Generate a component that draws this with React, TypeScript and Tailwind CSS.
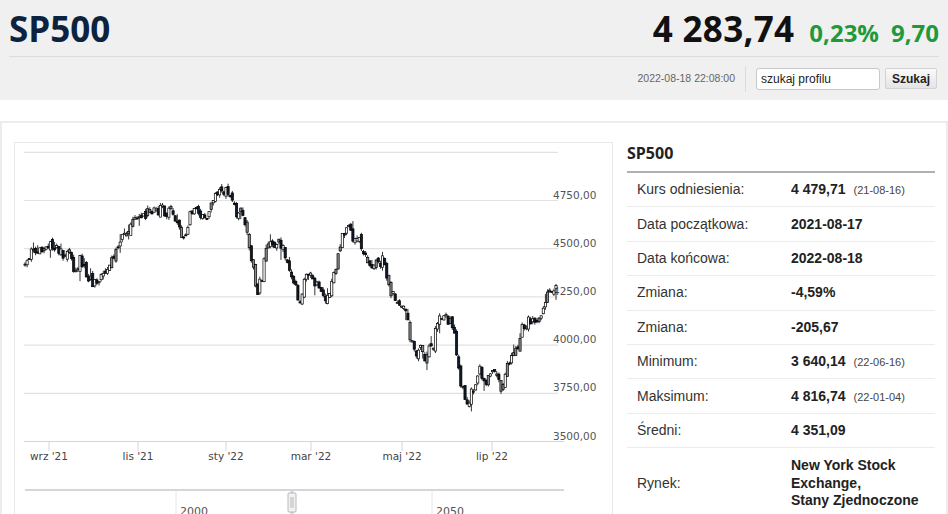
import React from 'react';

const KEY: [number, number][] = [
  [25, 264], [32, 252], [45, 245], [58, 250], [70, 258], [75, 275], [80, 260], [90, 280], [97, 285],
  [105, 272], [112, 258], [118, 243], [130, 228], [140, 217], [150, 212], [162, 210], [172, 213],
  [178, 230], [184, 240], [190, 215], [200, 212], [207, 218], [212, 205], [218, 193], [226, 192],
  [230, 198], [236, 212], [242, 210], [247, 235], [253, 270], [257, 292], [262, 275], [268, 243],
  [276, 242], [283, 248], [288, 262], [295, 285], [300, 305], [305, 277], [312, 275], [320, 295],
  [327, 302], [333, 280], [340, 245], [347, 225], [352, 236], [358, 240], [363, 250], [370, 262],
  [378, 266], [384, 255], [388, 285], [395, 300], [402, 305], [407, 318], [411, 342], [416, 358],
  [420, 345], [424, 360], [428, 350], [433, 345], [438, 320], [445, 318], [452, 322], [455, 330],
  [457, 358], [461, 385], [464, 395], [467, 408], [471, 392], [475, 385], [479, 368], [484, 385],
  [489, 380], [494, 368], [499, 385], [503, 388], [508, 365], [513, 352], [518, 345], [522, 330],
  [528, 322], [535, 318], [542, 315], [546, 300], [552, 288], [556, 290],
];

function interp(x: number) {
  for (let i = 1; i < KEY.length; i++) {
    const [x1, y1] = KEY[i];
    const [x0, y0] = KEY[i - 1];
    if (x <= x1) return y0 + ((x - x0) / (x1 - x0)) * (y1 - y0);
  }
  return KEY[KEY.length - 1][1];
}

function rng(seed: number) {
  return () => {
    seed = (seed + 0x6d2b79f5) | 0;
    let t = Math.imul(seed ^ (seed >>> 15), 1 | seed);
    t = (t + Math.imul(t ^ (t >>> 7), 61 | t)) ^ t;
    return ((t ^ (t >>> 14)) >>> 0) / 4294967296;
  };
}

const candles = (() => {
  const r = rng(11);
  const n = 252;
  const out: { x: number; o: number; c: number; hi: number; lo: number; fill: string }[] = [];
  let prev = interp(25);
  for (let i = 0; i < n; i++) {
    const x = 25 + (i * 531) / (n - 1);
    const c = interp(x) + (r() - 0.5) * 11;
    const o = prev + (r() - 0.5) * 6;
    const hi = Math.min(o, c) - r() * 3 - (r() < 0.1 ? r() * 8 : 0);
    const lo = Math.max(o, c) + r() * 3 + (r() < 0.1 ? r() * 10 : 0);
    const up = c < o;
    const fill = up ? (r() < 0.3 ? '#8a8a8a' : '#ffffff') : r() < 0.12 ? '#8a8a8a' : '#0f1a2a';
    out.push({ x, o, c, hi, lo, fill });
    prev = c;
  }
  return out;
})();

const levels = ['5000,00', '4750,00', '4500,00', '4250,00', '4000,00', '3750,00', '3500,00'];
const months: [number, string][] = [
  [49, "wrz '21"],
  [138, "lis '21"],
  [226, "sty '22"],
  [311, "mar '22"],
  [402, "maj '22"],
  [492, "lip '22"],
];

function Chart() {
  return (
    <svg width="597" height="398" viewBox="15 143 597 398" className="block">
      {levels.map((label, k) => {
        const y = 152.3 + k * 48.2;
        return (
          <g key={label}>
            {k < 6 && <line x1="24" x2="558" y1={y} y2={y} stroke="#e2e2e2" strokeWidth="1.2" />}
            {k > 0 && (
              <text x="553" y={y - 2} fontSize="10.5" fill="#555" fontFamily="'DejaVu Sans', sans-serif">
                {label}
              </text>
            )}
          </g>
        );
      })}
      <line x1="24" x2="564" y1="441.5" y2="441.5" stroke="#ccd6eb" strokeWidth="1.2" />
      {months.map(([x, label]) => (
        <g key={label}>
          <line x1={x} x2={x} y1="441.5" y2="451" stroke="#ccd6eb" strokeWidth="1" />
          <text x={x} y="460" textAnchor="middle" fontSize="10.5" fill="#444" fontFamily="'DejaVu Sans', sans-serif">
            {label}
          </text>
        </g>
      ))}
      {candles.map((d, i) => {
        const top = Math.min(d.o, d.c);
        const h = Math.max(Math.abs(d.o - d.c), 1);
        return (
          <g key={i}>
            <line x1={d.x} x2={d.x} y1={d.hi} y2={d.lo} stroke="#000" strokeWidth="0.8" />
            <rect x={d.x - 1.1} y={top} width="2.2" height={h} fill={d.fill} stroke="#000" strokeWidth="0.7" />
          </g>
        );
      })}
      {/* navigator */}
      <line x1="176" x2="176" y1="491" y2="541" stroke="#e6e6e6" />
      <line x1="432" x2="432" y1="491" y2="541" stroke="#e6e6e6" />
      <text x="180" y="515" fontSize="11" fill="#555" fontFamily="'DejaVu Sans', sans-serif">2000</text>
      <text x="436" y="515" fontSize="11" fill="#555" fontFamily="'DejaVu Sans', sans-serif">2050</text>
      <line x1="25" x2="564" y1="490" y2="490" stroke="#c8c8c8" strokeWidth="1.6" />
      <rect x="290.5" y="490" width="3" height="30" fill="#c9d7ea" />
      <rect x="288" y="493" width="8" height="19" rx="1" fill="#f2f2f2" stroke="#a8a8a8" strokeWidth="0.8" />
      <line x1="291" x2="291" y1="497" y2="508" stroke="#a8a8a8" strokeWidth="0.8" />
      <line x1="293" x2="293" y1="497" y2="508" stroke="#a8a8a8" strokeWidth="0.8" />
    </svg>
  );
}

const rows: { label: string; value: string; date?: string }[] = [
  { label: 'Kurs odniesienia:', value: '4 479,71', date: '(21-08-16)' },
  { label: 'Data początkowa:', value: '2021-08-17' },
  { label: 'Data końcowa:', value: '2022-08-18' },
  { label: 'Zmiana:', value: '-4,59%' },
  { label: 'Zmiana:', value: '-205,67' },
  { label: 'Minimum:', value: '3 640,14', date: '(22-06-16)' },
  { label: 'Maksimum:', value: '4 816,74', date: '(22-01-04)' },
  { label: 'Średni:', value: '4 351,09' },
];

export default function App() {
  return (
    <div className="w-[948px] h-[514px] overflow-hidden bg-white font-['Liberation_Sans',Arial,sans-serif]">
      <header className="h-[100px] bg-[#f0f0f0] px-[9px]">
        <div className="h-[57px] border-b border-[#dcdcdc] flex items-start justify-between pt-[11px]">
          <h1 className="font-['Open_Sans',sans-serif] font-bold text-[35px] leading-[35px] text-[#0c2340]">
            SP500
          </h1>
          <div className="flex items-baseline font-['Open_Sans',sans-serif] font-bold leading-[35px]">
            <span className="text-[35px] text-[#111] tracking-[0.3px]">4 283,74</span>
            <span className="text-[24px] text-[#1e9a3c] ml-[15px]">0,23%</span>
            <span className="text-[24px] text-[#1e9a3c] ml-[12px]">9,70</span>
          </div>
        </div>
        <div className="h-[43px] flex items-center justify-end pr-[2px]">
          <span className="text-[10.5px] text-[#666]">2022-08-18 22:08:00</span>
          <span className="w-px h-[26px] bg-[#dcdcdc] mx-[10px]" />
          <input
            type="text"
            defaultValue="szukaj profilu"
            className="w-[124px] h-[22px] rounded-[3px] border border-[#c8c8c8] bg-white px-[4px] text-[12px] text-[#222] outline-none"
          />
          <button className="ml-[5px] w-[52px] h-[21px] rounded-[2px] border border-[#d2d2d2] bg-gradient-to-b from-[#fafafa] to-[#e4e4e4] text-[12px] font-bold text-[#222]">
            Szukaj
          </button>
        </div>
      </header>

      <div className="mt-[21px] border-2 border-[#ececec] h-[400px] flex pl-[12px] pt-[19px] pr-[11px]">
        <div className="w-[599px] h-[400px] shrink-0 border border-[#e8e8e8]">
          <Chart />
        </div>
        <div className="ml-[14px] w-[308px] shrink-0">
          <h2 className="font-['Open_Sans',sans-serif] font-bold text-[16px] leading-[22px] text-[#222] pb-[7px] border-b-2 border-[#b0b0b0]">
            SP500
          </h2>
          {rows.map((r, i) => (
            <div key={i} className="h-[34.4px] border-b border-[#ececec] grid grid-cols-[164px_1fr] items-center text-[14px]">
              <span className="pl-[10px] text-[#333]">{r.label}</span>
              <span className="font-bold text-[#222]">
                {r.value}
                {r.date && <span className="ml-[8px] font-normal text-[11px] text-[#444]">{r.date}</span>}
              </span>
            </div>
          ))}
          <div className="grid grid-cols-[164px_1fr] items-center text-[14px] pt-[9px] pb-[9px]">
            <span className="pl-[10px] text-[#333]">Rynek:</span>
            <span className="font-bold text-[#222] leading-[17.5px] pr-[4px]">
              New York Stock Exchange,
              <br />
              Stany Zjednoczone
            </span>
          </div>
        </div>
      </div>
    </div>
  );
}
